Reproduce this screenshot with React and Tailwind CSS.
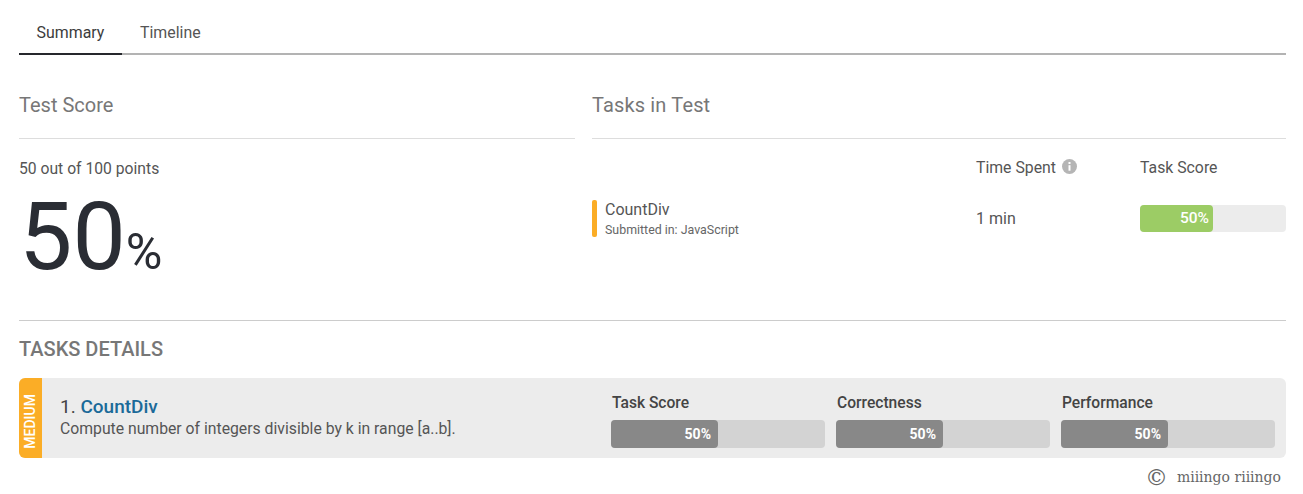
import React from "react";

const ScoreBar = ({ label }) => (
  <div className="w-[214px]">
    <p className="text-[15.6px] leading-[20px] font-medium text-[#444] h-[32px] pl-px pt-[5px]">{label}</p>
    <div className="h-[28px] w-full rounded-[4px] bg-[#d3d3d3]">
      <div className="flex h-full w-1/2 items-center justify-end rounded-[4px] bg-[#888888] pr-[7px] text-[14px] font-bold text-white">
        50%
      </div>
    </div>
  </div>
);

const InfoIcon = () => (
  <svg width="15" height="15" viewBox="0 0 15 15" className="mb-[4px]">
    <circle cx="7.5" cy="7.5" r="7.5" fill="#b5b5b5" />
    <rect x="6.5" y="3" width="2" height="2" fill="#fff" />
    <rect x="6.5" y="6.2" width="2" height="5.5" fill="#fff" />
  </svg>
);

const App = () => {
  return (
    <div className="h-[494px] overflow-hidden bg-white pl-[19px] pr-[17px] text-[#444] font-['Roboto',sans-serif]">
      {/* Tabs */}
      <div className="flex h-[55px] border-b-2 border-[#b3b3b3]">
        <div className="-mb-[2px] flex h-[55px] w-[103px] items-center justify-center border-b-2 border-[#26282d] pt-[12px] text-[15.9px] text-[#3c3c3c]">
          Summary
        </div>
        <div className="flex h-[53px] items-center pl-[18px] pt-[13px] text-[15.9px] text-[#555]">Timeline</div>
      </div>

      <div className="flex gap-[17px]">
        {/* Test score */}
        <div className="w-[556px]">
          <h2 className="flex h-[84px] items-center border-b border-[#dddddd] pt-[16px] text-[20px] font-normal text-[#777]">
            Test Score
          </h2>
          <p className="pt-[20px] text-[15.7px] leading-[20px] text-[#555]">50 out of 100 points</p>
          <div className="flex items-baseline pt-[8px] leading-none text-[#2a2d34]">
            <span className="text-[95px] leading-[100px]">50</span>
            <span className="text-[50px] leading-none">%</span>
          </div>
        </div>

        {/* Tasks in test */}
        <div className="flex-1">
          <h2 className="flex h-[84px] items-center border-b border-[#dddddd] pt-[16px] text-[20px] tracking-[0.15px] font-normal text-[#777]">
            Tasks in Test
          </h2>
          <div className="flex pt-[19px] text-[15.8px] leading-[20px] text-[#555]">
            <div className="w-[384px]" />
            <div className="flex w-[164px] items-center gap-[6px]">
              Time Spent
              <InfoIcon />
            </div>
            <div>Task Score</div>
          </div>
          <div className="flex items-center pt-[22px]">
            <div className="flex h-[37px] w-[384px] items-center gap-[8px]">
              <div className="h-full w-[5px] rounded-[2px] bg-[#fbad26]" />
              <div>
                <p className="text-[16px] leading-[20px] text-[#555]">CountDiv</p>
                <p className="mt-[2px] text-[12.4px] leading-[16px] text-[#666]">Submitted in: JavaScript</p>
              </div>
            </div>
            <div className="w-[164px] text-[16px] text-[#555]">1 min</div>
            <div className="h-[27px] flex-1 rounded-[4px] bg-[#ececec]">
              <div className="flex h-full w-1/2 items-center justify-end rounded-[4px] bg-[#9ccc65] pr-[4px] text-[15.5px] font-medium text-white">
                50%
              </div>
            </div>
          </div>
        </div>
      </div>

      {/* Tasks details */}
      <div className="mt-[33px] border-t border-[#cccccc]">
        <h2 className="flex h-[57px] items-center pb-[2px] text-[20px] font-medium text-[#777]">TASKS DETAILS</h2>
        <div className="flex h-[80px] overflow-hidden rounded-[6px] bg-[#ececec]">
          <div className="flex w-[23px] items-center justify-center bg-[#fbad26] pt-[6px]">
            <span className="rotate-180 text-[14px] font-medium text-white [writing-mode:vertical-rl]">MEDIUM</span>
          </div>
          <div className="w-[569px] pl-[18px] pt-[18px]">
            <p className="text-[19px] leading-[22px] text-[#444]">
              1. <span className="font-medium text-[#1b6a99]">CountDiv</span>
            </p>
            <p className="text-[15.75px] leading-[22px] text-[#555]">Compute number of integers divisible by k in range [a..b].</p>
          </div>
          <div className="flex gap-[11px] pt-[10px]">
            <ScoreBar label="Task Score" />
            <ScoreBar label="Correctness" />
            <ScoreBar label="Performance" />
          </div>
        </div>
        <p className="flex items-center justify-end gap-[9px] pr-[5px] pt-[9px] text-[14px] leading-[20px] text-[#666] font-['DejaVu_Serif',serif]">
          <span className="text-[23px]">©</span>
          <span>miiingo riiingo</span>
        </p>
      </div>
    </div>
  );
};

export default App;
